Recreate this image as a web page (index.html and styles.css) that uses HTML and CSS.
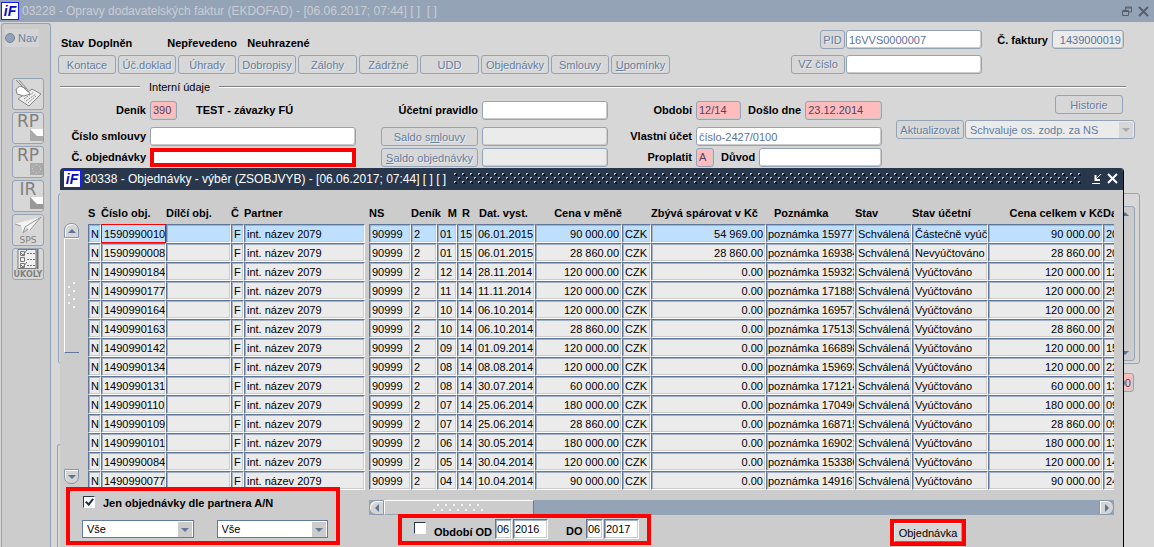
FILE: index.html
```html
<!DOCTYPE html>
<html lang="cs">
<head>
    <meta charset="UTF-8">
    <meta name="viewport" content="width=device-width, initial-scale=1.0">
    <title>Opravy dodavatelských faktur</title>
    <link rel="stylesheet" href="styles.css">
</head>
<body>
    <header class="titlebar">
        <span class="logo">iF</span>
        <h1>03228 - Opravy dodavatelských faktur (EKDOFAD) - [06.06.2017; 07:44] [ ]&nbsp; [ ]</h1>
        <button class="win-btn" aria-label="Obnovit">
            <svg width="11" height="11" viewBox="0 0 11 11" fill="none" stroke="#595f68"><path d="M.5 4.5h6v5h-6zM.5 5.5h6M3.5 4V1h6v5H7M3.5 2h6"/></svg>
        </button>
        <button class="win-btn" aria-label="Zavřít">
            <svg width="11" height="11" viewBox="0 0 11 11" fill="none" stroke="#595f68" stroke-width="2"><path d="M1 1l9 9M10 1l-9 9"/></svg>
        </button>
    </header>

    <div class="workspace">
        <nav class="sidebar">
            <label class="nav-radio"><input type="radio" name="nav">Nav</label>
            <div class="tools">
                <button aria-label="Zápis">
                    <svg width="30" height="30" viewBox="0 0 30 30" fill="#eee" stroke="#888"><path d="M5 20l14-10 9 5-12 12z"/><path d="M3 10l4-3 7 3 3 5-6 2-7-2z" fill="#fff"/><path d="M3 1l12 12M6 1l8 9" fill="none"/><path d="M11 20l10-7M13 22l10-7M15 24l8-7" stroke-dasharray="2 1" fill="none"/></svg>
                </button>
                <button>
                    <span>RP</span>
                    <svg width="13" height="12" viewBox="0 0 13 12"><path fill="#fff" d="M0 0h13v7H6z"/><path fill="#aaa" d="M0 0l7 7h6v5H0z"/></svg>
                </button>
                <button>
                    <span>RP</span>
                    <svg width="13" height="12" viewBox="0 0 13 12"><path fill="#aaa" d="M0 0h13v12H0z"/><circle cx="6.500" cy="6" r="4" fill="none" stroke="#ddd" stroke-dasharray="1 2"/></svg>
                </button>
                <button>
                    <span>IR</span>
                    <svg width="13" height="12" viewBox="0 0 13 12"><path fill="#fff" d="M0 0h13v7H6z"/><path fill="#999" d="M0 0l7 7h6v5H0z"/></svg>
                </button>
                <button class="captioned">
                    <svg width="28" height="20" viewBox="0 0 28 20"><path fill="#f4f4f4" d="M0 9L27 2 16 15l-5-3-2 6-2-7z"/><path fill="none" stroke="#999" d="M27 2L11 12l-2 6 5-4M1 9l6 2M27 2L16 15"/></svg>
                    <small>SPS</small>
                </button>
                <button class="captioned">
                    <svg width="22" height="20" viewBox="0 0 22 20" fill="none" stroke="#777"><path fill="#f0f0f0" d="M1 .5h18v19H1z"/><path d="M20.500 0v20" stroke-width="2"/><path d="M3.500 2.500h4v4h-4zM3.500 8.500h4v4h-4zM3.500 14.500h4v4h-4zM4 4l2 2 4-5M4 16l2 2 4-5"/><path stroke-dasharray="2 1" d="M10 4.500h8M10 10.500h8M10 16.500h8"/></svg>
                    <small><b>ÚKOLY</b></small>
                </button>
            </div>
        </nav>

        <main class="main">
            <div class="top">
                <div>
                    <p class="status"><b>Stav</b><b class="state">Doplněn</b><b class="transfer">Nepřevedeno</b><b>Neuhrazené</b></p>
                    <div class="tabs">
                        <button class="btn">Kontace</button>
                        <button class="btn">Úč.doklad</button>
                        <button class="btn">Úhrady</button>
                        <button class="btn">Dobropisy</button>
                        <button class="btn tab">Zálohy</button>
                        <button class="btn tab">Zádržné</button>
                        <button class="btn tab">UDD</button>
                        <button class="btn wide">Objednávky</button>
                        <button class="btn">Smlouvy</button>
                        <button class="btn tab"><u>U</u>pomínky</button>
                    </div>
                </div>
                <div class="ident">
                    <button class="btn pid">PID</button>
                    <input class="field" value="16VVS0000007" aria-label="PID">
                    <label for="faktura">Č. faktury</label>
                    <input class="field readonly num" id="faktura" value="1439000019" readonly>
                    <button class="btn vz">VZ číslo</button>
                    <input class="field" aria-label="VZ číslo">
                </div>
            </div>

            <h2 class="legend">Interní údaje</h2>

            <div class="internal">
                <div class="form">
                    <label for="denik">Deník</label>
                    <div class="group">
                        <input class="field required w-27" id="denik" value="390">
                        <b class="denik-name">TEST - závazky FÚ</b>
                    </div>
                    <label for="pravidlo">Účetní pravidlo</label>
                    <input class="field" id="pravidlo">
                    <label for="obdobi">Období</label>
                    <div class="group">
                        <input class="field required w-45" id="obdobi" value="12/14">
                        <label for="doslo">Došlo dne</label>
                        <input class="field required grow" id="doslo" value="23.12.2014">
                    </div>

                    <label for="smlouva">Číslo smlouvy</label>
                    <input class="field" id="smlouva">
                    <button class="btn saldo">Saldo s<u>m</u>louvy</button>
                    <input class="field readonly" aria-label="Saldo smlouvy" readonly>
                    <label for="ucet">Vlastní účet</label>
                    <input class="field" id="ucet" value="číslo-2427/0100">

                    <label for="objednavka">Č. objednávky</label>
                    <input class="field marked" id="objednavka">
                    <button class="btn saldo"><u>S</u>aldo objednávky</button>
                    <input class="field readonly" aria-label="Saldo objednávky" readonly>
                    <label for="proplatit">Proplatit</label>
                    <div class="group">
                        <input class="field required w-18" id="proplatit" value="A">
                        <label for="duvod">Důvod</label>
                        <input class="field grow" id="duvod">
                    </div>
                </div>
                <div class="approve">
                    <button class="btn history">Historie</button>
                    <div class="approve-row">
                        <button class="btn update">Aktualizovat</button>
                        <span class="select off">
                            <select aria-label="Schvaluje" disabled><option>Schvaluje os. zodp. za NS</option></select>
                        </span>
                    </div>
                </div>
            </div>

            <section class="items">
                <div class="items-scroll"><i class="arrow up"></i><i class="arrow down"></i></div>
            </section>
            <div class="total"><input class="field required num" value="0.00" aria-label="Celkem"></div>
            <section class="lower"></section>
        </main>
    </div>

    <section class="dialog" role="dialog" aria-labelledby="dialog-title">
        <header class="dialog-bar">
            <span class="logo">iF</span>
            <h2 id="dialog-title">30338 - Objednávky - výběr (ZSOBJVYB) - [06.06.2017; 07:44] [ ] [ ]</h2>
            <svg class="grip" height="12">
                <defs>
                    <pattern id="dots" width="8" height="8" patternUnits="userSpaceOnUse">
                        <path fill="#0a0f16" d="M1 1h2v2H1zM5 5h2v2H5z"/>
                        <path fill="#a9bacd" d="M0 0h2v1H1v1H0zM4 4h2v1H5v1H4z"/>
                    </pattern>
                </defs>
                <rect width="100%" height="12" fill="url(#dots)"/>
            </svg>
            <button class="win-btn" aria-label="Minimalizovat">
                <svg width="12" height="12" viewBox="0 0 12 12" fill="none" stroke="#fff"><path d="M1 10.500h8M10 1L5 6"/><path d="M4.500 2v5H9" stroke-width="2"/></svg>
            </button>
            <button class="win-btn" aria-label="Zavřít">
                <svg width="12" height="12" viewBox="0 0 12 12" fill="none" stroke="#fff" stroke-width="2"><path d="M1 1l9 9M10 1l-9 9"/></svg>
            </button>
        </header>

        <div class="list">
            <div class="vscroll">
                <button class="knob" aria-label="Nahoru"><i class="arrow up"></i></button>
                <div class="vthumb">
                    <svg width="8" height="28" fill="#f4f4f4"><path d="M5 0h2v2H5zM0 4h2v2H0zM5 8h2v2H5zM0 12h2v2H0zM5 16h2v2H5zM0 20h2v2H0zM5 24h2v2H5z"/></svg>
                </div>
                <button class="knob bottom" aria-label="Dolů"><i class="arrow down"></i></button>
            </div>
            <div class="table-wrap">
                <table class="orders">
                    <colgroup>
                        <col class="c-s"><col class="c-cislo"><col class="c-dilci"><col class="c-typ"><col class="c-partner"><col class="c-gap">
                        <col class="c-ns"><col class="c-denik"><col class="c-m"><col class="c-r"><col class="c-datum"><col class="c-cena"><col class="c-mena">
                        <col class="c-zbyva"><col class="c-pozn"><col class="c-stav"><col class="c-ucetni"><col class="c-celkem"><col class="c-da">
                    </colgroup>
                    <thead>
                        <tr><th>S</th><th>Číslo obj.</th><th>Dílčí obj.</th><th>Č</th><th>Partner</th><th></th><th>NS</th><th>Deník</th><th class="num">M</th><th class="mid">R</th><th class="in">Dat. vyst.</th><th class="num">Cena v měně</th><th></th><th>Zbývá spárovat v Kč</th><th class="in2">Poznámka</th><th>Stav</th><th>Stav účetní</th><th class="num">Cena celkem v Kč</th><th>Da</th></tr>
                    </thead>
                    <tbody>
                        <tr class="current"><td>N</td><td class="focus">1590990010</td><td></td><td>F</td><td>int. název 2079</td><td class="gap"></td><td>90999</td><td>2</td><td>01</td><td>15</td><td>06.01.2015</td><td class="num">90 000.00</td><td>CZK</td><td class="num">54 969.00</td><td class="note">poznámka 159777</td><td>Schválená</td><td>Částečně vyúčtováno</td><td class="num">90 000.00</td><td>20</td></tr>
                        <tr><td>N</td><td>1590990008</td><td></td><td>F</td><td>int. název 2079</td><td class="gap"></td><td>90999</td><td>2</td><td>01</td><td>15</td><td>06.01.2015</td><td class="num">28 860.00</td><td>CZK</td><td class="num">28 860.00</td><td class="note">poznámka 169384</td><td>Schválená</td><td>Nevyúčtováno</td><td class="num">28 860.00</td><td>20</td></tr>
                        <tr><td>N</td><td>1490990184</td><td></td><td>F</td><td>int. název 2079</td><td class="gap"></td><td>90999</td><td>2</td><td>12</td><td>14</td><td>28.11.2014</td><td class="num">120 000.00</td><td>CZK</td><td class="num">0.00</td><td class="note">poznámka 159323</td><td>Schválená</td><td>Vyúčtováno</td><td class="num">120 000.00</td><td>12</td></tr>
                        <tr><td>N</td><td>1490990177</td><td></td><td>F</td><td>int. název 2079</td><td class="gap"></td><td>90999</td><td>2</td><td>11</td><td>14</td><td>11.11.2014</td><td class="num">120 000.00</td><td>CZK</td><td class="num">0.00</td><td class="note">poznámka 171889</td><td>Schválená</td><td>Vyúčtováno</td><td class="num">120 000.00</td><td>25</td></tr>
                        <tr><td>N</td><td>1490990164</td><td></td><td>F</td><td>int. název 2079</td><td class="gap"></td><td>90999</td><td>2</td><td>10</td><td>14</td><td>06.10.2014</td><td class="num">120 000.00</td><td>CZK</td><td class="num">0.00</td><td class="note">poznámka 169571</td><td>Schválená</td><td>Vyúčtováno</td><td class="num">120 000.00</td><td>20</td></tr>
                        <tr><td>N</td><td>1490990163</td><td></td><td>F</td><td>int. název 2079</td><td class="gap"></td><td>90999</td><td>2</td><td>10</td><td>14</td><td>06.10.2014</td><td class="num">28 860.00</td><td>CZK</td><td class="num">0.00</td><td class="note">poznámka 175135</td><td>Schválená</td><td>Vyúčtováno</td><td class="num">28 860.00</td><td>20</td></tr>
                        <tr><td>N</td><td>1490990142</td><td></td><td>F</td><td>int. název 2079</td><td class="gap"></td><td>90999</td><td>2</td><td>09</td><td>14</td><td>01.09.2014</td><td class="num">120 000.00</td><td>CZK</td><td class="num">0.00</td><td class="note">poznámka 166898</td><td>Schválená</td><td>Vyúčtováno</td><td class="num">120 000.00</td><td>15</td></tr>
                        <tr><td>N</td><td>1490990134</td><td></td><td>F</td><td>int. název 2079</td><td class="gap"></td><td>90999</td><td>2</td><td>08</td><td>14</td><td>08.08.2014</td><td class="num">120 000.00</td><td>CZK</td><td class="num">0.00</td><td class="note">poznámka 159693</td><td>Schválená</td><td>Vyúčtováno</td><td class="num">120 000.00</td><td>22</td></tr>
                        <tr><td>N</td><td>1490990131</td><td></td><td>F</td><td>int. název 2079</td><td class="gap"></td><td>90999</td><td>2</td><td>08</td><td>14</td><td>30.07.2014</td><td class="num">60 000.00</td><td>CZK</td><td class="num">0.00</td><td class="note">poznámka 171214</td><td>Schválená</td><td>Vyúčtováno</td><td class="num">60 000.00</td><td>13</td></tr>
                        <tr><td>N</td><td>1490990110</td><td></td><td>F</td><td>int. název 2079</td><td class="gap"></td><td>90999</td><td>2</td><td>07</td><td>14</td><td>25.06.2014</td><td class="num">180 000.00</td><td>CZK</td><td class="num">0.00</td><td class="note">poznámka 170496</td><td>Schválená</td><td>Vyúčtováno</td><td class="num">180 000.00</td><td>09</td></tr>
                        <tr><td>N</td><td>1490990109</td><td></td><td>F</td><td>int. název 2079</td><td class="gap"></td><td>90999</td><td>2</td><td>07</td><td>14</td><td>25.06.2014</td><td class="num">28 860.00</td><td>CZK</td><td class="num">0.00</td><td class="note">poznámka 168715</td><td>Schválená</td><td>Vyúčtováno</td><td class="num">28 860.00</td><td>09</td></tr>
                        <tr><td>N</td><td>1490990101</td><td></td><td>F</td><td>int. název 2079</td><td class="gap"></td><td>90999</td><td>2</td><td>06</td><td>14</td><td>30.05.2014</td><td class="num">180 000.00</td><td>CZK</td><td class="num">0.00</td><td class="note">poznámka 169021</td><td>Schválená</td><td>Vyúčtováno</td><td class="num">180 000.00</td><td>13</td></tr>
                        <tr><td>N</td><td>1490990084</td><td></td><td>F</td><td>int. název 2079</td><td class="gap"></td><td>90999</td><td>2</td><td>05</td><td>14</td><td>30.04.2014</td><td class="num">120 000.00</td><td>CZK</td><td class="num">0.00</td><td class="note">poznámka 153386</td><td>Schválená</td><td>Vyúčtováno</td><td class="num">120 000.00</td><td>14</td></tr>
                        <tr><td>N</td><td>1490990077</td><td></td><td>F</td><td>int. název 2079</td><td class="gap"></td><td>90999</td><td>2</td><td>04</td><td>14</td><td>10.04.2014</td><td class="num">90 000.00</td><td>CZK</td><td class="num">0.00</td><td class="note">poznámka 149167</td><td>Schválená</td><td>Vyúčtováno</td><td class="num">90 000.00</td><td>24</td></tr>
                    </tbody>
                </table>
            </div>
        </div>

        <footer class="filters">
            <div class="mark partner-filter">
                <label class="check"><input type="checkbox" checked>Jen objednávky dle partnera A/N</label>
                <div class="selects">
                    <span class="select"><select aria-label="Stav"><option>Vše</option></select></span>
                    <span class="select"><select aria-label="Stav účetní"><option>Vše</option></select></span>
                </div>
            </div>
            <div class="filters-right">
                <div class="hscroll">
                    <button class="knob left" aria-label="Doleva"><i class="arrow left"></i></button>
                    <div class="hthumb">
                        <svg width="52" height="8" fill="#f4f4f4"><path d="M4 0h2v2H4zM12 0h2v2h-2zM20 0h2v2h-2zM28 0h2v2h-2zM36 0h2v2h-2zM44 0h2v2h-2zM0 5h2v2H0zM8 5h2v2H8zM16 5h2v2h-2zM24 5h2v2h-2zM32 5h2v2h-2zM40 5h2v2h-2zM48 5h2v2h-2z"/></svg>
                    </div>
                    <button class="knob right" aria-label="Doprava"><i class="arrow right"></i></button>
                </div>
                <div class="filters-row">
                    <div class="mark period">
                        <label class="check"><input type="checkbox">Období OD</label>
                        <input class="cell month" value="06" aria-label="Od měsíce">
                        <input class="cell year" value="2016" aria-label="Od roku">
                        <label class="to" for="do-mesic">DO</label>
                        <input class="cell month" id="do-mesic" value="06">
                        <input class="cell year" value="2017" aria-label="Do roku">
                    </div>
                    <div class="mark order"><button>Objednávka</button></div>
                </div>
            </div>
        </footer>
    </section>
</body>
</html>
```
FILE: styles.css
```css
*, *:before, *:after {
    box-sizing: border-box;
}

body {
    margin: 0;
    height: 100vh;
    display: flex;
    flex-direction: column;
    overflow: hidden;
    position: relative;
    background: #d7d7d7;
    color: #000;
    font: 11px/14px "Liberation Sans", Arial, sans-serif;
}

h1, h2, p {
    margin: 0;
    font-size: 12px;
    font-weight: normal;
}

button, input, select {
    font: inherit;
    color: inherit;
    margin: 0;
    padding: 0;
    border: 0;
    border-radius: 0;
    background: none;
    white-space: nowrap;
}

label {
    font-weight: bold;
    white-space: nowrap;
}

.num {
    text-align: right;
}

/* Title bars */
.titlebar, .dialog-bar {
    display: flex;
    align-items: center;
    flex-shrink: 0;
    height: 22px;
    white-space: nowrap;
}

.titlebar {
    background: #95a3b7;
    color: #c9cdd3;
    padding: 0 3px 0 1px;
}

.titlebar h1 {
    flex: 1;
}

.titlebar h1, .dialog-bar h2 {
    font-size: 12px;
    margin-left: 3px;
}

.logo {
    width: 18px;
    height: 18px;
    border: 1px solid #1a1aff;
    background: #fff;
    color: #0a0ac8;
    font: italic bold 14px/16px "Liberation Sans", Arial, sans-serif;
    text-align: center;
}

.win-btn {
    display: flex;
    width: 16px;
    justify-content: center;
}

/* Sidebar */
.workspace {
    flex: 1;
    display: flex;
    min-height: 0;
}

.sidebar {
    width: 50px;
    flex-shrink: 0;
    margin: 1px 0 0 1px;
    padding: 5px 3px;
    background: #ccc;
    border: 1px solid #95a3b7;
    border-bottom: 0;
    border-radius: 3px 3px 0 0;
}

.nav-radio {
    display: inline-flex;
    align-items: center;
    gap: 3px;
    height: 18px;
    padding-right: 1px;
    background: #d4d4d4;
    color: #6b82a3;
    font-weight: normal;
}

.nav-radio input {
    appearance: none;
    width: 10px;
    height: 10px;
    border: 1px solid #6b82a3;
    border-radius: 50%;
    background: #95a3b7;
}

.tools {
    display: grid;
    gap: 2px;
    padding: 31px 0 0 7px;
}

.tools button {
    display: flex;
    flex-direction: column;
    width: 32px;
    height: 32px;
    border: 1px solid #95a3b7;
    border-radius: 3px;
    background: #d7d7d7;
    color: #808080;
    overflow: hidden;
}

.tools svg {
    display: block;
    flex-shrink: 0;
}

.tools span {
    height: 16px;
    font: 17px/16px "DejaVu Sans", sans-serif;
}

.tools span + svg {
    margin-left: auto;
}

.tools .captioned {
    align-items: center;
}

.tools small {
    font: 9px/10px "DejaVu Sans", sans-serif;
}

.tools b {
    font-size: 8px;
}

/* Main form */
.main {
    flex: 1;
    min-width: 0;
    padding: 8px 0 0 7px;
    display: flex;
    flex-direction: column;
}

.top {
    display: flex;
    justify-content: space-between;
    padding-right: 30px;
}

.status {
    display: flex;
    gap: 4px;
    height: 25px;
    padding: 6px 0 0 3px;
    font-size: 11px;
}

.state {
    width: 75px;
}

.transfer {
    width: 76px;
}

.tabs {
    display: flex;
    gap: 2px;
}

.btn {
    height: 19px;
    width: 58px;
    border: 1px solid #95a3b7;
    border-radius: 3px;
    color: #647da1;
    text-shadow: 1px 1px 0 #ebebeb;
}

.tab {
    width: 59px;
}

.wide {
    width: 68px;
}

.ident {
    display: grid;
    grid-template-columns: 54px 136px 68px 72px;
    gap: 5px 1px;
    align-items: center;
    justify-items: end;
}

.pid {
    width: 25px;
}

.vz {
    width: 54px;
}

.ident label {
    padding-right: 3px;
}

.field {
    display: block;
    width: 100%;
    height: 19px;
    padding: 0 2px;
    border: 1px solid #95a3b7;
    border-radius: 3px;
    background: #fff;
    box-shadow: inset -1px -1px 0 #ccc;
    color: #5b7399;
}

.readonly {
    background: #ebebeb;
}

.required {
    background: #ffbcbc;
    color: #4d4466;
}

.marked {
    border: 4px solid #f00;
    border-radius: 0;
    box-shadow: none;
}

.w-27 { width: 27px; }
.w-45 { width: 45px; }
.w-18 { width: 18px; }

.grow {
    flex: 1;
    min-width: 0;
}

.legend {
    display: flex;
    align-items: center;
    gap: 9px;
    height: 16px;
    margin: 5px 28px 0 2px;
    font-size: 11px;
}

.legend:before, .legend:after {
    content: "";
    width: 80px;
    height: 2px;
    background: #808080;
    border-bottom: 1px solid #fff;
}

.legend:after {
    flex: 1;
}

.internal {
    display: flex;
    justify-content: space-between;
    padding-right: 19px;
}

.form {
    display: grid;
    grid-template-columns: 88px 206px 118px 126px 80px 186px;
    grid-template-rows: 25px 20px 20px;
    gap: 1px 4px;
    padding-top: 6px;
}

.form > label, .group {
    line-height: 19px;
}

.form > label, .saldo {
    justify-self: end;
}

.saldo {
    width: 97px;
}

.group {
    display: flex;
    gap: 4px;
}

.group label {
    padding-left: 3px;
}

.denik-name {
    margin-left: 15px;
}

.approve {
    display: flex;
    flex-direction: column;
    align-items: flex-end;
    gap: 6px;
    width: 239px;
}

.history {
    width: 68px;
    margin-right: 12px;
}

.approve-row {
    display: flex;
    gap: 1px;
}

.update {
    width: 68px;
}

.items {
    height: 171px;
    margin: 25px 14px 0 0;
    padding: 12px 4px 2px 0;
    border: 1px solid #95a3b7;
    border-radius: 3px;
}

.items-scroll {
    display: flex;
    flex-direction: column;
    justify-content: space-between;
    align-items: center;
    width: 21px;
    height: 100%;
    margin-left: auto;
    padding: 5px 0;
    border: 1px solid #95a3b7;
    border-radius: 3px;
    background: #ccc;
}

.total {
    width: 60px;
    margin: 9px 20px 0 auto;
}

.lower {
    flex: 1;
    margin: 52px 30px 0 -1px;
    border: 1px solid #95a3b7;
    border-bottom: 0;
    border-radius: 3px 3px 0 0;
}

/* Selects */
.select {
    position: relative;
    display: block;
    width: 112px;
    height: 18px;
    border: 1px solid #647a9c;
    background: #fff;
}

.select select {
    appearance: none;
    width: 100%;
    height: 100%;
    padding: 0 18px 0 4px;
    opacity: 1;
}

.select:before {
    content: "";
    position: absolute;
    right: 1px;
    top: 1px;
    bottom: 0;
    width: 14px;
    background: #ccc;
}

.select:after {
    content: "";
    position: absolute;
    right: 4px;
    top: 7px;
    border: 4px solid transparent;
    border-top-color: #647a9c;
    border-bottom: 0;
}

.off {
    width: 170px;
    height: 19px;
    border-color: #95a3b7;
    border-radius: 3px;
    background: #ebebeb;
    color: #647da1;
}

.off:before {
    background: #d7d7d7;
}

.off:after {
    border-top-color: #aaa;
}

/* Arrows and scroll bars */
.arrow {
    display: block;
    border: 4px solid transparent;
}

.up { border-top: 0; border-bottom-color: #5b7399; }
.down { border-bottom: 0; border-top-color: #5b7399; }
.arrow.left { border-left: 0; border-right-color: #5b7399; }
.arrow.right { border-right: 0; border-left-color: #5b7399; }

.knob {
    display: flex;
    align-items: center;
    justify-content: center;
    width: 15px;
    height: 15px;
    border: 1px solid #8696ae;
    border-radius: 7px 7px 0 0;
    background: #d4d4d4;
    box-shadow: inset 1px 1px 0 #fff;
}

.bottom { border-radius: 0 0 7px 7px; }
.knob.left { border-radius: 7px 0 0 7px; }
.knob.right { border-radius: 0 7px 7px 0; }

/* Order picker */
.dialog {
    position: absolute;
    top: 168px;
    left: 60px;
    right: 30px;
    bottom: 0;
    background: #ccc;
    border-right: 1px solid #000;
    border-radius: 4px 4px 0 0;
    overflow: hidden;
}

.dialog-bar {
    background: #28374c;
    color: #fff;
    padding: 0 2px 0 3px;
}

.grip {
    flex: 1;
    min-width: 0;
    margin: 0 8px 0 8px;
}

.list {
    display: flex;
    gap: 9px;
    padding: 16px 9px 0 4px;
}

.vscroll {
    display: flex;
    flex-direction: column;
    width: 15px;
    flex-shrink: 0;
    padding: 17px 0 6px;
}

.vthumb {
    display: flex;
    align-items: center;
    justify-content: center;
    height: 115px;
    margin-bottom: auto;
    border: 1px solid #fff;
    border-right: 0;
    border-bottom-color: #647a9c;
}

.table-wrap {
    flex: 1;
    min-width: 0;
    overflow: hidden;
}

.orders {
    width: 1046px;
    table-layout: fixed;
    border-collapse: separate;
    border-spacing: 0;
}

.c-s { width: 13px; }
.c-cislo { width: 65px; }
.c-dilci { width: 65px; }
.c-typ { width: 13px; }
.c-partner { width: 121px; }
.c-gap { width: 4px; }
.c-ns { width: 42px; }
.c-denik { width: 26px; }
.c-m { width: 20px; }
.c-r { width: 18px; }
.c-datum { width: 60px; }
.c-cena { width: 87px; }
.c-mena { width: 29px; }
.c-zbyva { width: 115px; }
.c-pozn { width: 89px; }
.c-stav { width: 57px; }
.c-ucetni { width: 76px; }
.c-celkem { width: 115px; }
.c-da { width: 31px; }

.orders th {
    height: 18px;
    padding: 0;
    text-align: left;
    vertical-align: top;
    white-space: nowrap;
}

.orders th.num { text-align: right; }
.orders th.mid { text-align: center; }
.orders th.in { padding-left: 4px; }
.orders th.in2 { padding-left: 8px; }

.orders td {
    height: 19px;
    padding: 1px 2px 0 2px;
    line-height: 16px;
    border: 1px solid #5f7699;
    border-right-color: #fff;
    border-bottom-color: #fff;
    box-shadow: inset 1px 1px 0 #a3b1c4, inset -1px -1px 0 #ccc;
    background: #ebebeb;
    white-space: nowrap;
    overflow: hidden;
}

.orders .note {
    padding-left: 1px;
    padding-right: 0;
}

.orders .current td {
    background: #bfdfff;
}

.orders .current .focus {
    border-color: #f00;
    box-shadow: none;
}

.orders .gap, .orders .current .gap {
    border: 0;
    box-shadow: none;
    background: none;
    padding: 0;
}

/* Dialog filters */
.mark {
    border: 4px solid #f00;
}

.filters {
    display: flex;
    gap: 29px;
    margin-top: -3px;
    padding: 0 9px 0 6px;
    position: relative;
}

.partner-filter {
    width: 274px;
    height: 58px;
    padding: 3px 8px 0 12px;
}

.check {
    display: flex;
    gap: 8px;
    align-items: center;
    height: 18px;
}

.partner-filter .check {
    padding-left: 1px;
}

.check input {
    appearance: none;
    width: 12px;
    height: 12px;
    margin-bottom: 3px;
    border: 1px solid #28374c;
    border-right-color: #fff;
    border-bottom-color: #fff;
    background: #fff;
}

.check input:checked:after {
    content: "";
    display: block;
    width: 5px;
    height: 8px;
    margin-left: 3px;
    border: solid #1c2c44;
    border-width: 0 2px 2px 0;
    transform: rotate(40deg);
}

.selects {
    display: flex;
    gap: 23px;
    margin-top: 8px;
}

.filters-right {
    flex: 1;
    min-width: 0;
    padding-top: 13px;
}

.hscroll {
    display: flex;
    height: 15px;
    background: #95a3b7;
}

.hthumb {
    display: flex;
    align-items: center;
    justify-content: center;
    width: 150px;
    margin-right: auto;
    background: #ccc;
    border: 1px solid #fff;
    border-right-color: #647a9c;
    border-bottom-color: #95a3b7;
}

.filters-row {
    display: flex;
    justify-content: space-between;
    align-items: flex-start;
    padding: 0 148px 0 29px;
}

.period {
    display: flex;
    align-items: flex-start;
    gap: 1px;
    width: 253px;
    height: 31px;
    margin-top: -1px;
    padding: 1px 0 0 12px;
}

.period .check {
    width: 80px;
    height: 20px;
    align-items: flex-end;
}

.period .check input {
    margin-bottom: 5px;
}

.cell {
    height: 20px;
    padding: 0 1px;
    border: 1px solid #5f7699;
    border-right-color: #fff;
    border-bottom-color: #fff;
    box-shadow: inset 1px 1px 0 #a3b1c4, inset -1px -1px 0 #ccc;
    background: #fff;
}

.month { width: 17px; }
.year { width: 35px; }

.to {
    width: 36px;
    padding: 5px 0 0 17px;
}

.order {
    margin-top: 4px;
}

.order button {
    display: block;
    width: 68px;
    height: 19px;
    border: 1px solid #fff;
    border-right-color: #95a3b7;
    border-bottom-color: #5f7699;
    background: #d7d7d7;
}
```
